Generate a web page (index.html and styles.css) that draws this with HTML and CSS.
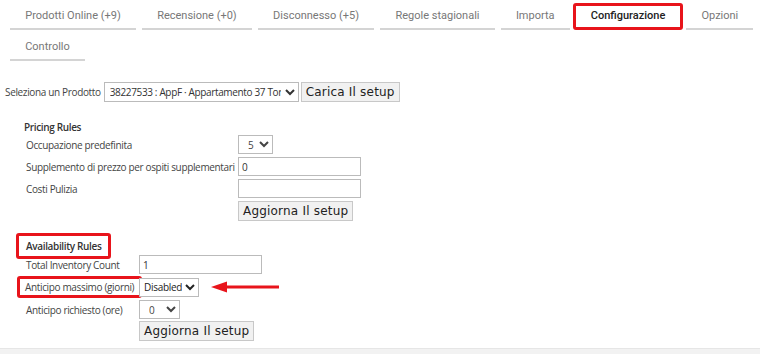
FILE: index.html
```html
<!DOCTYPE html>
<html lang="it">
<head>
  <meta charset="UTF-8">
  <title>Configurazione</title>
  <link rel="stylesheet" href="styles.css">
</head>
<body>

<nav class="tabs">
  <a class="tab">Prodotti Online (+9)</a>
  <a class="tab">Recensione (+0)</a>
  <a class="tab">Disconnesso (+5)</a>
  <a class="tab">Regole stagionali</a>
  <a class="tab">Importa</a>
  <a class="tab active">Configurazione</a>
  <a class="tab">Opzioni</a>
  <a class="tab">Controllo</a>
</nav>

<div class="product-row">
  <label>Seleziona un Prodotto</label>
  <select class="product-select">
    <option>38227533 : AppF · Appartamento 37 Torino</option>
  </select>
  <button class="btn">Carica Il setup</button>
</div>

<section class="rules pricing">
  <h3>Pricing Rules</h3>
  <div class="form-grid">
    <span class="lbl">Occupazione predefinita</span>
    <span><select class="small-select"><option>5</option></select></span>

    <span class="lbl">Supplemento di prezzo per ospiti supplementari</span>
    <span><input type="text" class="txt" value="0"></span>

    <span class="lbl">Costi Pulizia</span>
    <span><input type="text" class="txt"></span>

    <span></span>
    <span><button class="btn">Aggiorna Il setup</button></span>
  </div>
</section>

<section class="rules availability">
  <h3>Availability Rules</h3>
  <div class="form-grid">
    <span class="lbl">Total Inventory Count</span>
    <span><input type="text" class="txt" value="1"></span>

    <span class="lbl marked">Anticipo massimo (giorni)</span>
    <span class="with-arrow">
      <select class="small-select wide"><option>Disabled</option></select>
      <svg class="arrow" width="70" height="12" viewBox="0 0 70 12">
        <path d="M0 6 L16 0.5 L16 4.5 L68 4.5 L68 7.5 L16 7.5 L16 11.5 Z" fill="#e8141b"/>
      </svg>
    </span>

    <span class="lbl">Anticipo richiesto (ore)</span>
    <span><select class="small-select"><option>0</option></select></span>

    <span></span>
    <span><button class="btn">Aggiorna Il setup</button></span>
  </div>
</section>

<footer class="bottom-bar"></footer>

</body>
</html>
```

FILE: styles.css
```css
body {
  margin: 0;
  font-family: 'Open Sans', sans-serif;
  font-size: 10px;
  letter-spacing: -0.35px;
  color: #444;
  background: #fff;
}

.tabs {
  display: flex;
  flex-wrap: wrap;
  gap: 1px 6px;
  padding-left: 10px;
}
.tab {
  font-family: Roboto, sans-serif;
  font-size: 11px;
  letter-spacing: 0;
  line-height: 14px;
  color: #777;
  padding: 9px 15.2px 5px;
  border-bottom: 2px solid #d4d4d4;
  white-space: nowrap;
}
.tab.active {
  color: #222;
  font-weight: 500;
  margin: 3px -3px 0;
  padding: 3px 15px 4px;
  border: 3px solid #e8141b;
  border-radius: 3px;
}

.product-row {
  display: flex;
  align-items: center;
  margin-top: 21px;
  padding-left: 5px;
}
.product-row label {
  margin-right: 3px;
}
.product-select {
  width: 195px;
  height: 20px;
  font-family: 'Open Sans', sans-serif;
  font-size: 10px;
  letter-spacing: -0.35px;
  color: #333;
  border: 1px solid #bbb;
  background: #fff;
  padding: 0 1px;
  margin: 0 2px 0 0;
}

.btn {
  font-family: 'DejaVu Sans', sans-serif;
  font-size: 12px;
  letter-spacing: 0.2px;
  color: #222;
  background: #f1f1f1;
  border: 1px solid #c8c8c8;
  border-radius: 0;
  padding: 0 4px;
  height: 20px;
  line-height: 16px;
  margin: 0;
}

.rules {
  padding-left: 24px;
}
.rules h3 {
  font-size: 10px;
  font-weight: 600;
  color: #333;
  margin: 0;
  line-height: 16px;
}
.pricing {
  margin-top: 17px;
}
.pricing .form-grid {
  grid-template-columns: 212px auto;
}
.availability {
  margin-top: 12px;
}
.availability .form-grid {
  grid-template-columns: 113px auto;
  row-gap: 2px;
}
.availability h3 {
  display: inline-block;
  margin: 0 0 -4px -8px;
  padding: 2px 7px 2px;
  border: 3px solid #e8141b;
  border-radius: 3px;
}

.form-grid {
  display: grid;
  align-items: center;
  row-gap: 3px;
  padding-left: 2px;
}
.form-grid > span {
  display: flex;
  align-items: center;
}
.lbl {
  color: #444;
  white-space: nowrap;
}
.lbl.marked {
  margin-left: -9px;
  margin-right: -3px;
  padding: 0 3px 0 5px;
  line-height: 16px;
  border: 3px solid #e8141b;
  border-radius: 3px;
}

.txt {
  width: 123px;
  height: 19px;
  box-sizing: border-box;
  border: 1px solid #bbb;
  font-family: 'Open Sans', sans-serif;
  font-size: 10px;
  color: #333;
  padding: 0 3px;
  margin: 0;
}
.small-select {
  height: 19px;
  width: 35px;
  font-family: 'Open Sans', sans-serif;
  font-size: 10px;
  letter-spacing: -0.3px;
  color: #444;
  border: 1px solid #bbb;
  background: #fff;
  padding: 0 0 0 5px;
  margin: 0;
}
.availability .small-select {
  width: 41px;
}
.availability .small-select.wide {
  width: 60px;
  padding-left: 0;
  color: #222;
}
.with-arrow .arrow {
  margin-left: 12px;
}

.bottom-bar {
  margin-top: 7px;
  height: 8px;
  background: #f2f2f2;
  border-top: 1px solid #e6e6e6;
}
```
